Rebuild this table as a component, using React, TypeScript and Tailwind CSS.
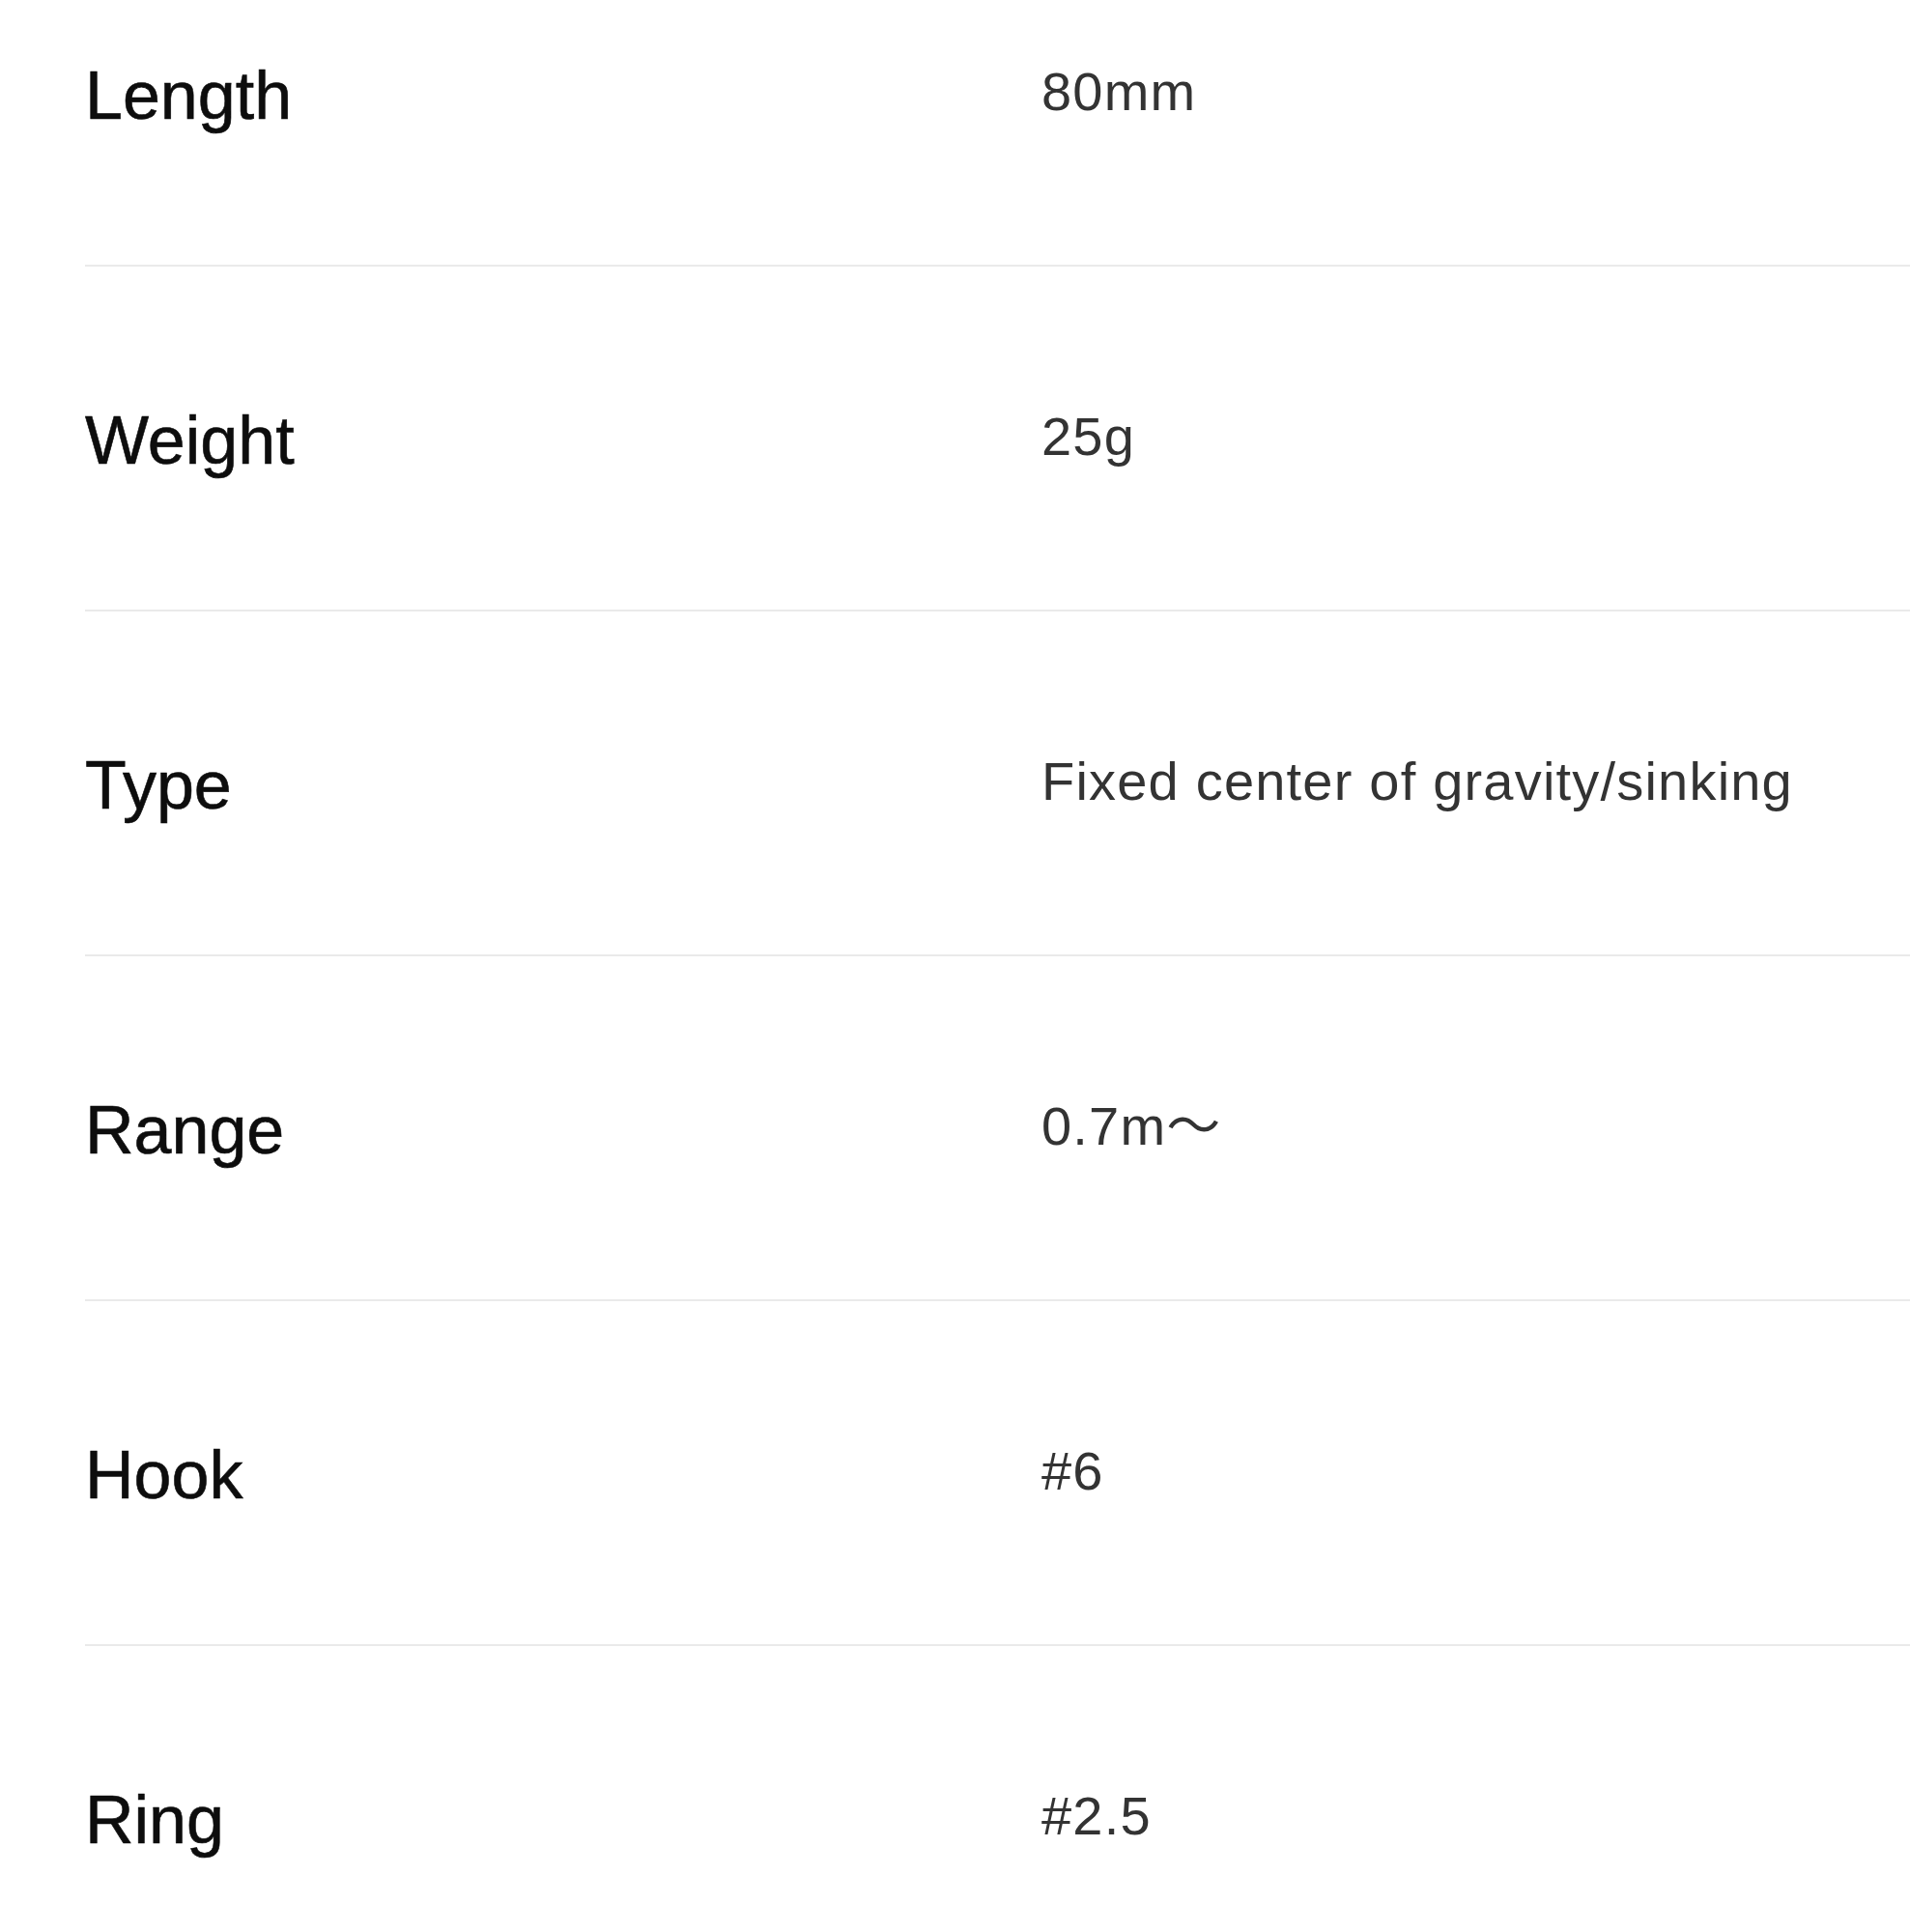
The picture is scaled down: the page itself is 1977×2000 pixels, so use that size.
const specs = [
  { label: 'Length', value: '80mm' },
  { label: 'Weight', value: '25g' },
  { label: 'Type', value: 'Fixed center of gravity/sinking' },
  { label: 'Range', value: '0.7m〜' },
  { label: 'Hook', value: '#6' },
  { label: 'Ring', value: '#2.5' },
];

export default function App() {
  return (
    <div className="min-h-screen overflow-hidden bg-white">
      {/* spec table, first row runs off the top of the page */}
      <div className="-mt-[81px] ml-[88px]">
        {specs.map((spec) => (
          <div
            key={spec.label}
            className="grid h-[357px] grid-cols-[990px_1fr] items-center border-b-2 border-[#eaeaea] pt-1"
          >
            <div className="font-['Liberation_Sans','Noto_Sans_CJK_JP',sans-serif] text-[70px] leading-none text-[#0d0d0d] [-webkit-text-stroke:0.6px_#0d0d0d]">
              {spec.label}
            </div>
            <div className="pb-[8px] font-['Liberation_Sans','Noto_Sans_CJK_JP',sans-serif] text-[56px] leading-none tracking-[1.2px] text-[#333333]">
              {spec.value}
            </div>
          </div>
        ))}
      </div>
    </div>
  );
}
